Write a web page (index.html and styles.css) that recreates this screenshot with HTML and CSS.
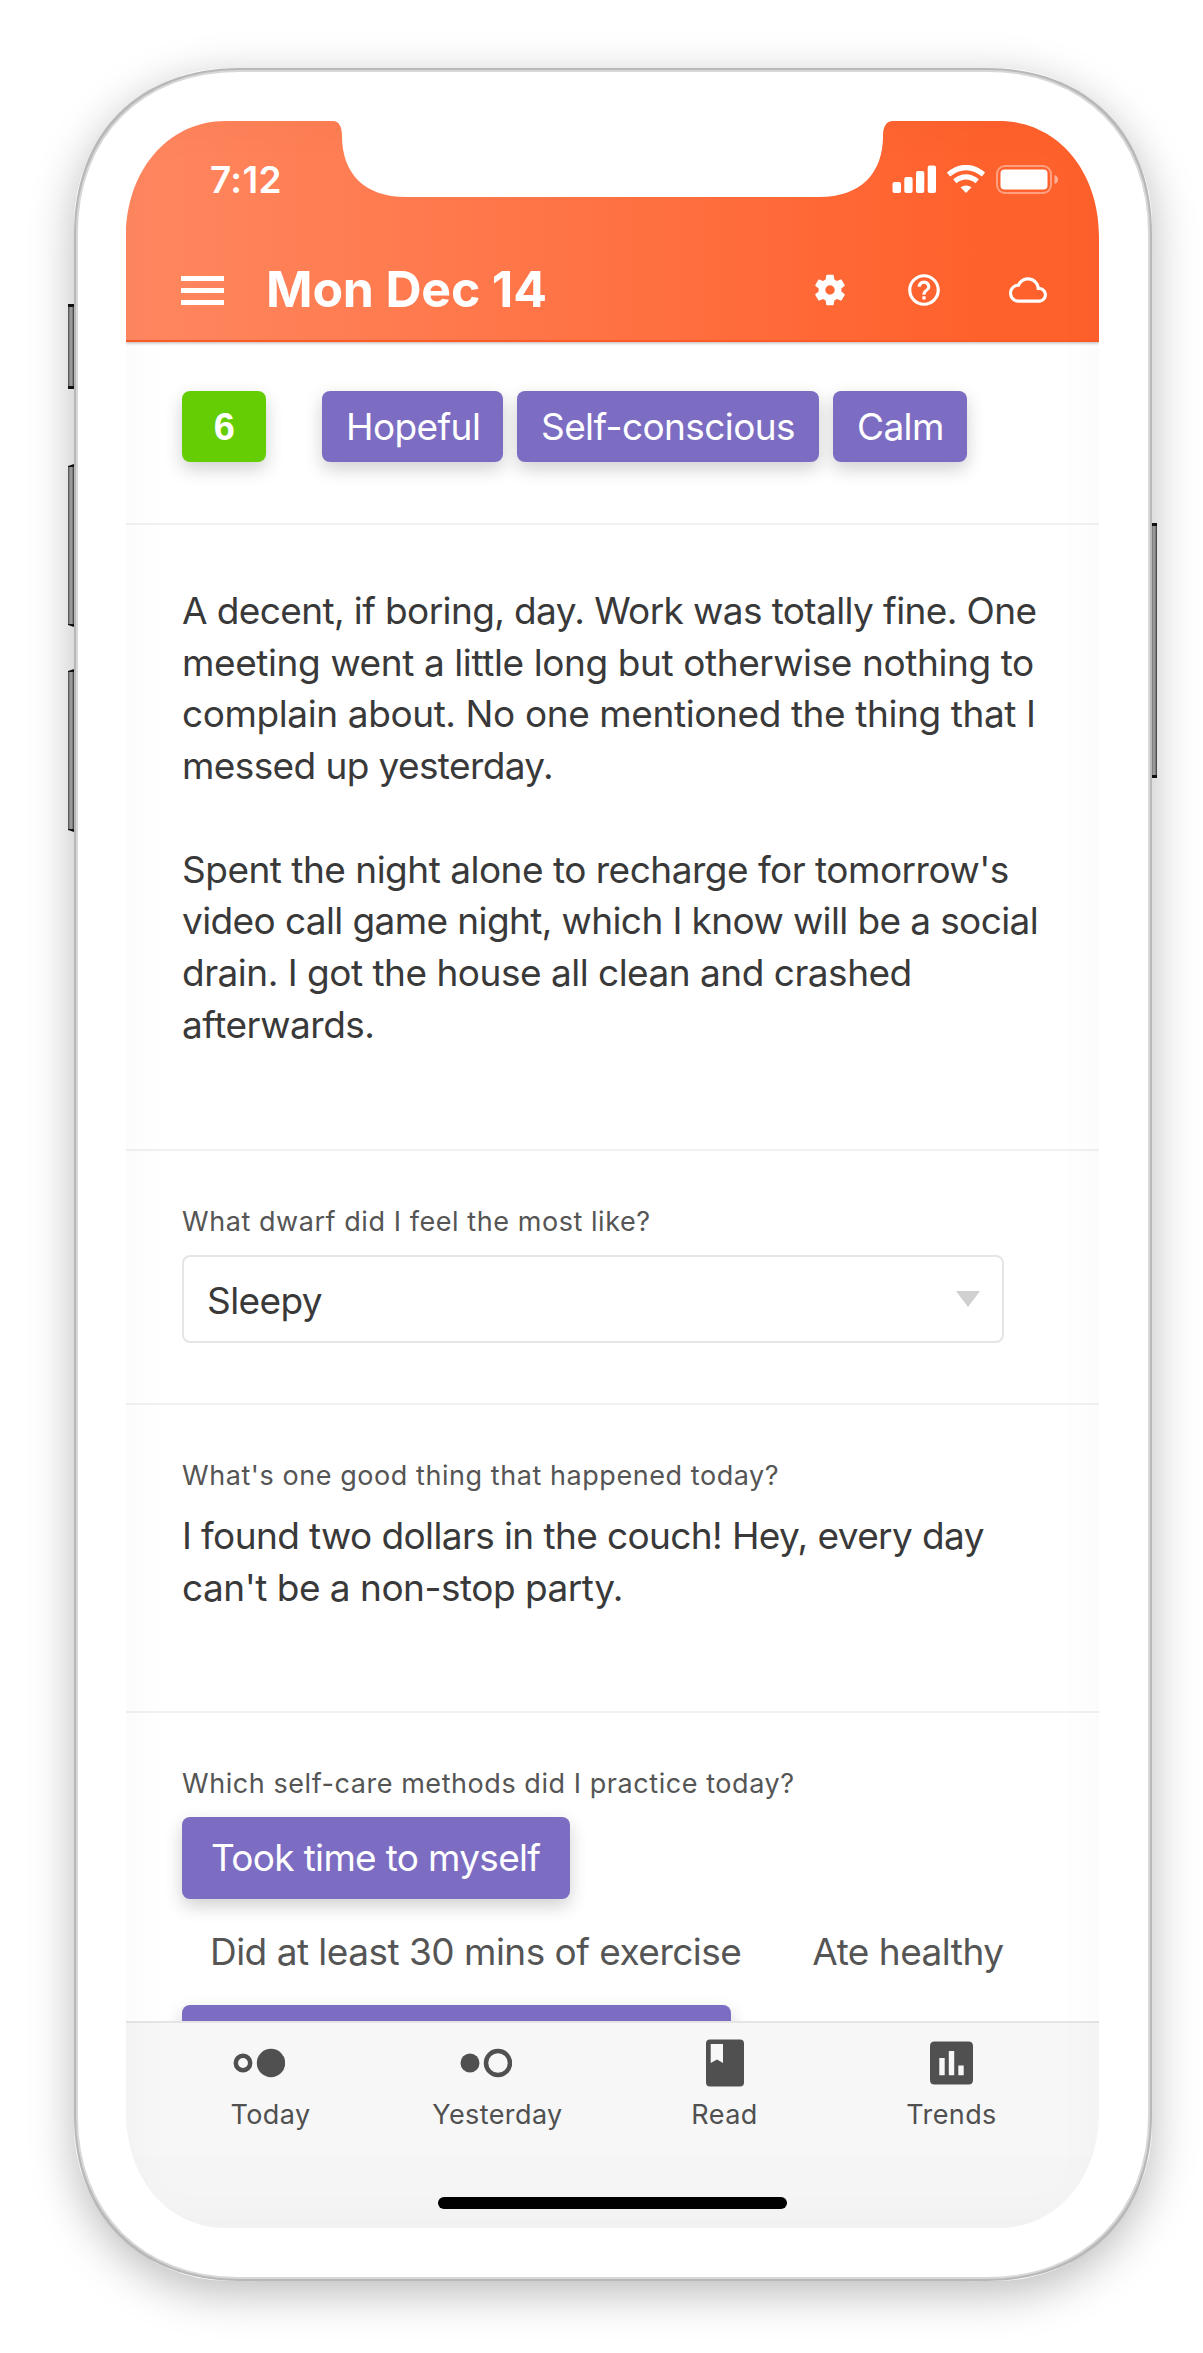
FILE: index.html
```html
<!DOCTYPE html>
<html lang="en">
<head>
<meta charset="utf-8">
<title>Journal</title>
<link rel="stylesheet" href="styles.css">
</head>
<body>
<div class="device">
  <i class="side mute"></i><i class="side vol-up"></i><i class="side vol-down"></i><i class="side power"></i>
  <svg class="frame" width="1078" height="2213" viewBox="0 0 1078 2213">
    <path class="rim-outer" d="M165 0H913C1013 0 1078 65 1078 165V2048C1078 2148 1013 2213 913 2213H165C65 2213 0 2148 0 2048V165C0 65 65 0 165 0Z"/>
    <path class="rim-inner" d="M165 3H913C1010 3 1075 68 1075 165V2048C1075 2145 1010 2210 913 2210H165C68 2210 3 2145 3 2048V165C3 68 68 3 165 3Z"/>
  </svg>
  <main class="screen">
    <header class="header">
      <div class="status">
        <span class="clock">7:12</span>
        <svg class="signals" width="168" height="30" viewBox="0 0 168 30" fill="#fff">
          <rect x="0.500" y="17" width="8.500" height="11" rx="2"/><rect x="12.300" y="12" width="8.300" height="16" rx="2"/><rect x="24" y="6" width="8.300" height="22" rx="2"/><rect x="35.700" y="0.500" width="8.300" height="27.500" rx="2"/>
          <g fill="none" stroke="#fff" stroke-width="5.200"><path d="M56.500 9.500Q74 -4.500 91.500 9.500"/><path d="M62.800 16.300Q74 7.500 85.200 16.300"/></g>
          <path d="M68.500 22.300Q74 18.500 79.500 22.300L74 28Z"/>
          <rect x="105" y="1" width="54" height="27" rx="8" fill="none" stroke="#fff" stroke-opacity=".4" stroke-width="2"/>
          <rect x="108.500" y="4.500" width="47" height="20" rx="4"/><path d="M162.500 10Q166 11 166 14.500T162.500 19Z" fill-opacity=".5"/>
        </svg>
      </div>
      <div class="titlebar">
        <svg class="menu" width="43" height="29" viewBox="0 0 43 29"><path d="M0 2.500H43M0 14.500H43M0 26.500H43" stroke="#fff" stroke-width="5"/></svg>
        <h1>Mon Dec 14</h1>
        <svg class="gear" width="38" height="38" viewBox="0 0 24 24" fill="#fff"><path d="M19.140 12.940c.04-.3.060-.61.060-.94 0-.32-.02-.64-.07-.94l2.030-1.580c.18-.14.230-.41.120-.61l-1.920-3.320c-.12-.22-.37-.29-.59-.22l-2.390.96c-.5-.38-1.030-.7-1.620-.94l-.36-2.540c-.04-.24-.24-.41-.48-.41h-3.840c-.24 0-.43.17-.47.41l-.36 2.540c-.59.24-1.130.57-1.620.94l-2.390-.96c-.22-.08-.47 0-.59.22L2.740 8.870c-.12.210-.08.470.12.610l2.030 1.580c-.05.300-.09.630-.09.940s.02.640.07.940l-2.030 1.580c-.18.140-.23.410-.12.610l1.920 3.320c.12.220.37.290.59.220l2.390-.96c.5.380 1.030.700 1.620.940l.36 2.540c.05.240.24.410.48.410h3.840c.24 0 .44-.17.470-.41l.36-2.540c.59-.24 1.130-.56 1.620-.94l2.390.96c.22.080.47 0 .59-.22l1.920-3.320c.12-.22.070-.47-.12-.61l-2.010-1.580zM12 15a3 3 0 1 1 0-6 3 3 0 0 1 0 6z"/></svg>
        <svg class="help" width="38" height="38" viewBox="0 0 24 24" fill="#fff"><path d="M11 18h2v-2h-2v2zm1-16C6.480 2 2 6.480 2 12s4.480 10 10 10 10-4.480 10-10S17.520 2 12 2zm0 18c-4.410 0-8-3.590-8-8s3.590-8 8-8 8 3.590 8 8-3.590 8-8 8zm0-14c-2.210 0-4 1.790-4 4h2c0-1.100.9-2 2-2s2 .9 2 2c0 2-3 1.750-3 5h2c0-2.250 3-2.500 3-5 0-2.210-1.790-4-4-4z"/></svg>
        <svg class="cloud" width="38" height="38" viewBox="0 0 24 24" fill="#fff"><path d="M19.350 10.040C18.670 6.590 15.640 4 12 4 9.110 4 6.600 5.640 5.350 8.040 2.340 8.360 0 10.910 0 14c0 3.310 2.690 6 6 6h13c2.760 0 5-2.240 5-5 0-2.640-2.050-4.780-4.650-4.960zM19 18H6c-2.210 0-4-1.790-4-4s1.790-4 4-4h.71C7.370 7.690 9.480 6 12 6c3.040 0 5.500 2.460 5.500 5.500v.5H19c1.660 0 3 1.340 3 3s-1.340 3-3 3z"/></svg>
      </div>
    </header>
    <section class="mood">
      <b class="tag score">6</b><span class="tag hopeful">Hopeful</span><span class="tag conscious">Self-conscious</span><span class="tag calm">Calm</span>
    </section>
    <section class="entry">
      <p><span class="tight">A decent, if boring, day. Work was totally fine. One</span><br><span class="loose">meeting went a little long but otherwise nothing to</span><br><span class="loose">complain about. No one mentioned the thing that I</span><br><span class="tight">messed up yesterday.</span></p>
      <p><span class="mid">Spent the night alone to recharge for tomorrow's</span><br><span class="tight">video call game night, which I know will be a social</span><br><span class="mid">drain. I got the house all clean and crashed</span><br><span class="mid">afterwards.</span></p>
    </section>
    <section class="dwarf">
      <h2>What dwarf did I feel the most like?</h2>
      <div class="select"><span>Sleepy</span><svg width="24" height="16" viewBox="0 0 24 16"><path d="M0 0H24L12 16Z" fill="#d0d0d0"/></svg></div>
    </section>
    <section class="good">
      <h2>What's one good thing that happened today?</h2>
      <p><span class="tight">I found two dollars in the couch! Hey, every day</span><br><span class="mid">can't be a non-stop party.</span></p>
    </section>
    <section class="care">
      <h2>Which self-care methods did I practice today?</h2>
      <div class="options">
        <span class="option on took">Took time to myself</span>
        <span class="option exercise">Did at least 30 mins of exercise</span>
        <span class="option healthy">Ate healthy</span>
        <span class="option on partial"></span>
      </div>
    </section>
    <nav class="tabs">
      <div class="tab"><svg class="dots" width="52" height="48" viewBox="0 0 52 48" fill="#505050"><circle cx="10" cy="24" r="7.200" fill="none" stroke="#505050" stroke-width="4.500"/><circle cx="38" cy="24" r="14.200"/></svg><span>Today</span></div>
      <div class="tab"><svg class="dots" width="52" height="48" viewBox="0 0 52 48" fill="#505050"><circle cx="10" cy="24" r="9.500"/><circle cx="38" cy="24" r="12" fill="none" stroke="#505050" stroke-width="4.500"/></svg><span>Yesterday</span></div>
      <div class="tab"><svg width="38" height="48" viewBox="0 0 38 48" fill="#505050"><path fill-rule="evenodd" d="M4 .5H34Q38 .5 38 4.500V43.500Q38 47.500 34 47.500H4Q0 47.500 0 43.500V4.500Q0 .5 4 .5ZM4.700 5V24L11 20.500L17 24V5Z"/></svg><span>Read</span></div>
      <div class="tab"><svg width="43" height="48" viewBox="0 0 43 48" fill="#505050"><path fill-rule="evenodd" d="M4.500 2.500H38.500Q43 2.500 43 7V41Q43 45.500 38.500 45.500H4.500Q0 45.500 0 41V7Q0 2.500 4.500 2.500ZM9.300 19V36.300H14.700V19ZM18.800 12V36.300H24.200V12ZM28.300 26.500V36.300H33.700V26.500Z"/></svg><span>Trends</span></div>
    </nav>
    <div class="home"><i></i></div>
  </main>
</div>
</body>
</html>
```
FILE: styles.css
```css
* { box-sizing: border-box; }
body { margin: 0; width: 1203px; height: 2353px; padding: 68px 0 0 74px; overflow: hidden; background: #fff; font-family: Inter, "Liberation Sans", sans-serif; color: #393939; }
h1, h2, p { margin: 0; font-weight: 400; }
.device { position: relative; width: 1078px; height: 2213px; padding: 53px 52px; border-radius: 155px; box-shadow: 0 12px 45px rgba(0,0,0,.27); }
.frame { position: absolute; left: 0; top: 0; overflow: visible; }
.rim-outer { fill: #b8b8b8; }
.rim-inner { fill: #fff; stroke: #d8d8d8; stroke-width: 2; }
.side { position: absolute; left: -6px; width: 6px; background: linear-gradient(90deg, #444, #999 35%, #999 65%, #333); border: solid #111; border-width: 3px 0; }
.mute { top: 236px; height: 85px; }
.vol-up, .vol-down { height: 163px; clip-path: polygon(0 2px, 100% 0, 100% 100%, 0 calc(100% - 2px)); }
.vol-up { top: 396px; }
.vol-down { top: 601px; }
.power { top: 455px; height: 255px; left: 1077px; }
.screen { position: relative; width: 973px; height: 2107px; display: flex; flex-direction: column; overflow: hidden; background: #fff;
  clip-path: path("M100 0H207C213 0 216 6 216 15C216 52 238 76 280 76H693C735 76 757 52 757 15C757 6 760 0 767 0H873C933 0 973 52 973 115V1992C973 2055 933 2107 873 2107H100C40 2107 0 2055 0 1992V115C0 52 40 0 100 0Z"); }
.screen::after { content: ""; position: absolute; inset: 0; pointer-events: none; box-shadow: inset 0 0 55px rgba(0,0,0,.03); }
.header { height: 221px; flex: none; background: linear-gradient(90deg, #ff8760, #ff612c 88%); border-bottom: 2px solid #ff5a26; color: #fff; box-shadow: 0 1px 3px rgba(0,0,0,.3); }
.status { display: flex; justify-content: space-between; padding: 44px 39px 0 84px; height: 143px; }
.clock { font-size: 37px; line-height: 30px; font-weight: 600; letter-spacing: .3px; }
.titlebar { display: flex; align-items: center; height: 52px; padding-left: 55px; }
h1 { font-size: 50px; font-weight: 700; line-height: 50px; height: 52px; width: 290px; margin-left: 42px; letter-spacing: -.2px; white-space: nowrap; }
.gear { margin-left: 255px; }
.help { margin-left: 56px; }
.cloud { margin-left: 66px; }
section { border-bottom: 2px solid #f1f1f1; padding-left: 56px; flex: none; }
.mood { height: 183px; padding-top: 49px; display: flex; align-items: flex-start; gap: 14px; }
.tag { height: 71px; line-height: 72px; padding: 0 24px; border-radius: 8px; background: #7c6dc3; color: #fff; font-size: 37px; letter-spacing: -.6px; white-space: nowrap; box-shadow: 0 7px 18px rgba(0,0,0,.19); }
.score { width: 84px; text-align: center; background: #65cd04; margin-right: 42px; padding: 0; font-family: "Liberation Sans", sans-serif; font-size: 38px; }
.hopeful { width: 181px; }
.conscious { width: 302px; }
.calm { width: 134px; }
.entry { height: 626px; padding-top: 60px; }
p { font-size: 37px; line-height: 51.700px; white-space: nowrap; }
.entry p + p { margin-top: 51.700px; }
.tight { letter-spacing: -.61px; }
.mid { letter-spacing: -.5px; }
.loose { letter-spacing: -.4px; }
h2 { font-size: 27px; line-height: 34px; color: #555; white-space: nowrap; letter-spacing: .56px; }
.dwarf { height: 254px; padding-top: 54px; }
.select { width: 822px; height: 88px; margin-top: 16px; border: 2px solid #e5e5e5; border-radius: 8px; padding: 0 22px 0 23px; display: flex; align-items: center; justify-content: space-between; font-size: 37px; letter-spacing: -.6px; }
.select span { padding-top: 2px; }
.good { height: 308px; padding-top: 54px; }
.good p { margin-top: 17px; }
.care { height: 308px; padding-top: 54px; border: 0; overflow: hidden; }
.options { display: flex; flex-wrap: wrap; width: 900px; margin-top: 16px; gap: 12px 14px; }
.option { height: 82px; line-height: 82px; padding: 0 29px; border-radius: 8px; font-size: 37px; letter-spacing: -.52px; white-space: nowrap; color: #555; }
.exercise, .healthy { padding-left: 28px; }
.option.on { background: #7c6dc3; color: #fff; box-shadow: 0 7px 18px rgba(0,0,0,.19); }
.took { width: 388px; letter-spacing: -.68px; margin-right: 400px; }
.partial { width: 549px; }
.tabs { height: 136px; flex: none; background: #f7f7f7; border-top: 2px solid #e5e5e5; padding: 16px 31px 0; display: grid; grid-template-columns: repeat(4, 227px); }
.tab { display: flex; flex-direction: column; align-items: center; gap: 11px; font-size: 27px; line-height: 34px; color: #505050; letter-spacing: .4px; }
.dots { margin-right: 24px; }
.home { flex: 1; background: #f5f5f5; padding: 40px 0 0 312px; }
.home i { display: block; width: 349px; height: 12px; border-radius: 6px; background: #000; }
```
